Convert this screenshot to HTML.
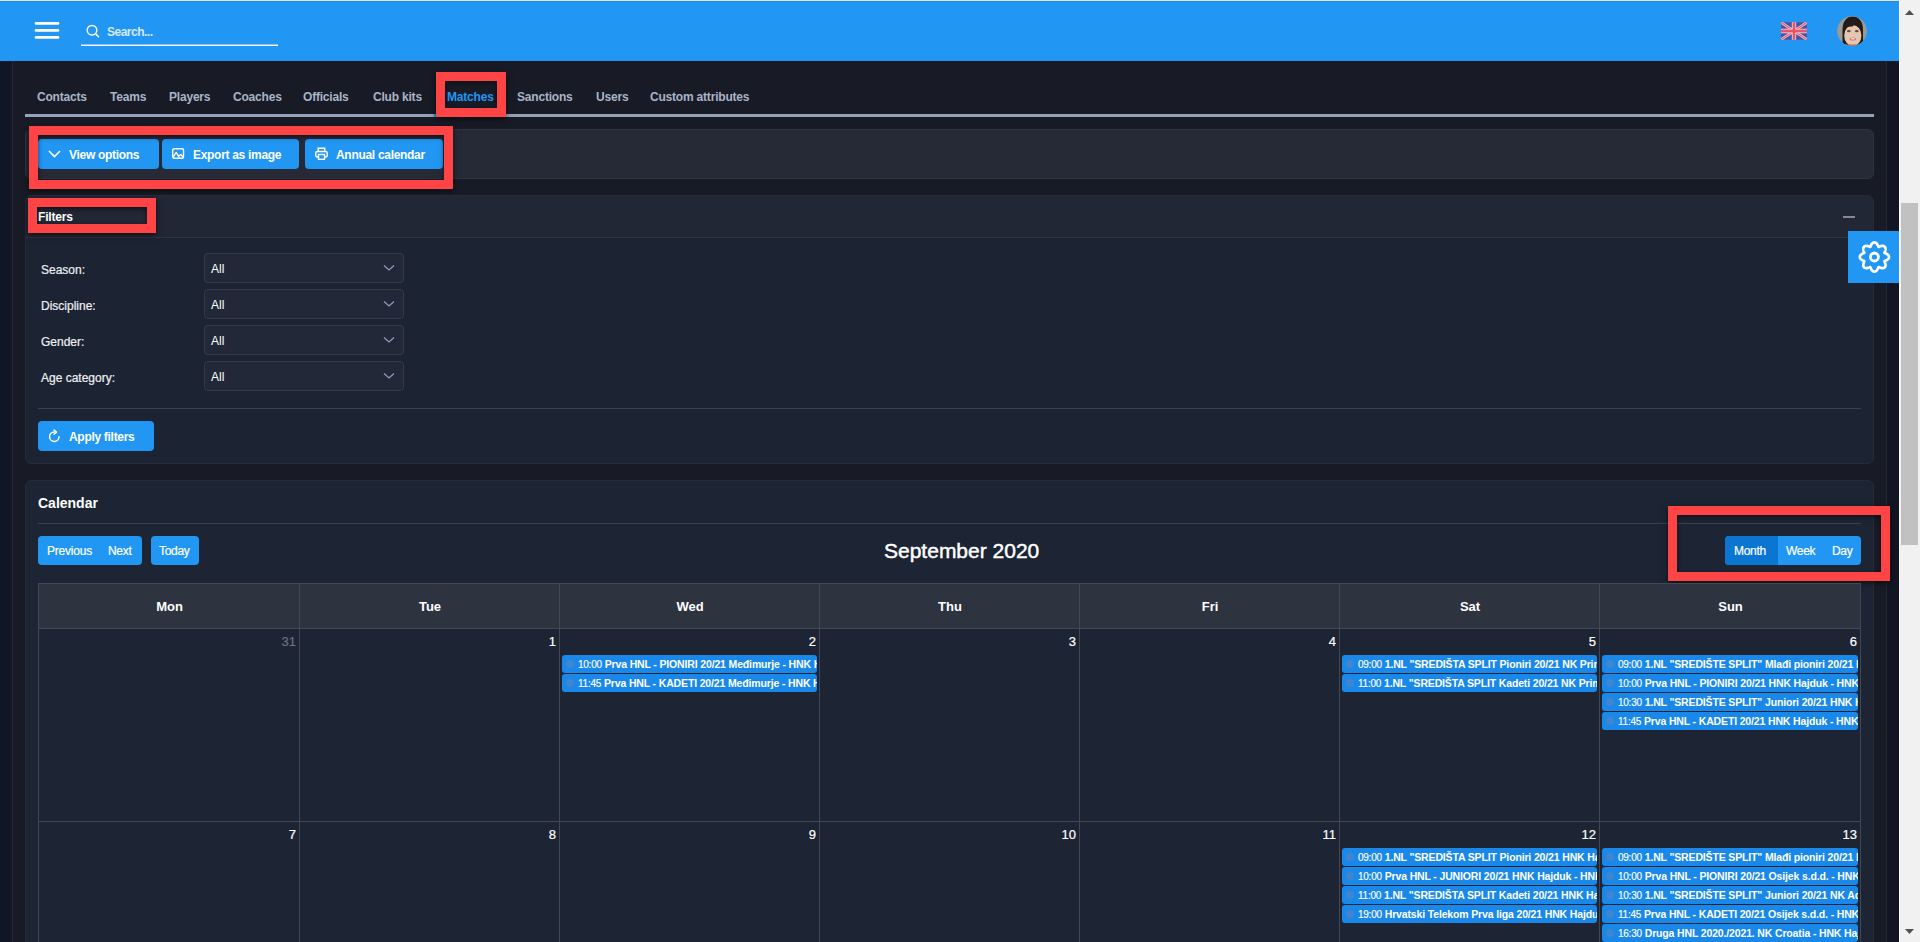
<!DOCTYPE html>
<html><head><meta charset="utf-8">
<style>
*{box-sizing:border-box;margin:0;padding:0}
html,body{width:1920px;height:942px;overflow:hidden;background:#181b26;font-family:"Liberation Sans",sans-serif;}
.abs{position:absolute}
#topline{left:0;top:0;width:1899px;height:1px;background:#efe3da}
#header{left:0;top:1px;width:1899px;height:60px;background:#2196f3;border-top:1px solid #1490f3}
#lstrip{left:0;top:61px;width:12px;height:881px;background:#111624}
#lline{left:12px;top:61px;width:1px;height:881px;background:#252933}
#rline{left:1886px;top:61px;width:1px;height:881px;background:#252933}
#rstrip{left:1887px;top:61px;width:12px;height:881px;background:#121622}
#sb{left:1899px;top:0;width:21px;height:942px;background:#f1f1f1;border-left:1px solid #fff}
#thumb{left:1901px;top:203px;width:17px;height:342px;background:#c1c1c1}
.tab{position:absolute;top:90px;font-size:12px;font-weight:bold;color:#a9b4c6;letter-spacing:-0.2px;white-space:nowrap}
#tabline{left:25px;top:114px;width:1849px;height:3px;background:#95a3b9}
.card{position:absolute;left:25px;width:1849px;border-radius:6px}
.btn{position:absolute;background:#2196f3;border-radius:4px;color:#fff;font-size:12px;font-weight:bold;white-space:nowrap;letter-spacing:-0.3px}
.red{position:absolute;border:9px solid #fe4444;box-shadow:0 2px 6px rgba(0,0,0,.6), inset 0 2px 5px rgba(0,0,0,.55)}
.lbl{position:absolute;left:41px;margin-top:1px;-webkit-text-stroke:0.2px #eef0f4;font-size:12px;color:#eef0f4;white-space:nowrap}
.sel{position:absolute;left:204px;width:200px;height:30px;border:1px solid #343a48;border-radius:4px;background:#222837}
.sel span{position:absolute;left:6px;top:8px;font-size:12px;color:#fff}
.sel svg{position:absolute;right:8px;top:10px}
.dh{top:599px;text-align:center;font-size:13px;font-weight:bold;color:#fff}
.dn{text-align:right;font-size:13px;color:#fff;-webkit-text-stroke:0.2px currentColor}
.ev{position:absolute;height:18px;background:#1a88e8;border-radius:3px;overflow:hidden;white-space:nowrap}
.ev i{position:absolute;left:4px;top:5px;width:8px;height:8px;border-radius:50%;background:rgba(120,130,170,.4)}
.et{position:absolute;left:16px;top:3px;font-size:10.5px;line-height:13px;color:#fff;white-space:nowrap}
.tm{letter-spacing:-0.25px;color:#fff;font-size:10px;-webkit-text-stroke:0.15px #fff}
.et b{font-weight:bold;letter-spacing:-0.15px}
</style></head><body>
<div class="abs" id="topline"></div>
<div class="abs" id="header"></div>
<div class="abs" id="lstrip"></div>
<div class="abs" id="lline"></div>
<div class="abs" id="rline"></div>
<div class="abs" id="rstrip"></div>

<!-- hamburger -->
<svg class="abs" style="left:34px;top:21px" width="26" height="19" viewBox="0 0 26 19"><g stroke="#fff" stroke-width="2.6" stroke-linecap="round"><line x1="2" y1="2.4" x2="24" y2="2.4"/><line x1="2" y1="9.4" x2="24" y2="9.4"/><line x1="2" y1="16.4" x2="24" y2="16.4"/></g></svg>
<!-- search -->
<svg class="abs" style="left:85px;top:23px" width="16" height="16" viewBox="0 0 16 16"><circle cx="7" cy="7.2" r="4.8" fill="none" stroke="#fff" stroke-width="1.5"/><line x1="10.5" y1="10.7" x2="13.6" y2="13.8" stroke="#fff" stroke-width="1.6" stroke-linecap="round"/></svg>
<div class="abs" style="left:107px;top:25px;font-size:12px;font-weight:bold;color:#d6e9fc;letter-spacing:-0.5px">Search...</div>
<div class="abs" style="left:81px;top:45px;width:197px;height:1px;background:#fff;box-shadow:0 -1px 0 rgba(255,255,255,.45)"></div>

<!-- flag -->
<svg class="abs" style="left:1781px;top:22px" width="26" height="18" viewBox="0 0 60 40"><rect width="60" height="40" fill="#4a52a4"/><path d="M0,0 L60,40 M60,0 L0,40" stroke="#f0c8d0" stroke-width="6"/><path d="M0,0 L60,40 M60,0 L0,40" stroke="#e8556a" stroke-width="2.5"/><path d="M30,0 V40 M0,20 H60" stroke="#f4e6ea" stroke-width="10"/><path d="M30,0 V40 M0,20 H60" stroke="#e8556a" stroke-width="6.5"/></svg>
<!-- avatar -->
<svg class="abs" style="left:1837px;top:16px" width="30" height="30" viewBox="0 0 30 30"><defs><clipPath id="cc"><circle cx="15" cy="15" r="14.8"/></clipPath><filter id="bl" x="-10%" y="-10%" width="120%" height="120%"><feGaussianBlur stdDeviation="0.45"/></filter></defs><g clip-path="url(#cc)"><rect width="30" height="30" fill="#9c9a95"/><g filter="url(#bl)"><path d="M5.5,30 L5.5,14 C5.5,5 10,0.5 15.5,0.5 C21.5,0.5 26,5 26,14 L26,30Z" fill="#221a17"/><ellipse cx="15.8" cy="19.5" rx="8.6" ry="10.6" fill="#e6c6b0"/><path d="M6.5,15 C6.5,5 11,2 15.5,2 C20,2 24.5,5 24.5,15 C23,11.5 21,9.5 17,9 L15.5,10.5 C12,10 9,11 6.5,15Z" fill="#221a17"/><ellipse cx="11.8" cy="15.2" rx="1.9" ry="1.1" fill="#5e4a42"/><ellipse cx="19.8" cy="15.2" rx="1.9" ry="1.1" fill="#5e4a42"/><ellipse cx="15.8" cy="23" rx="3.2" ry="1.5" fill="#c97a78"/><ellipse cx="15.8" cy="22.7" rx="2.2" ry="0.7" fill="#f0e0dc"/><rect x="8" y="28.5" width="15" height="2" fill="#b86a46"/></g></g></svg>


<!-- tabs -->
<div class="tab" style="left:37px">Contacts</div>
<div class="tab" style="left:110px">Teams</div>
<div class="tab" style="left:169px">Players</div>
<div class="tab" style="left:233px">Coaches</div>
<div class="tab" style="left:303px">Officials</div>
<div class="tab" style="left:373px">Club kits</div>
<div class="tab" style="left:447px;color:#2196f3">Matches</div>
<div class="tab" style="left:517px">Sanctions</div>
<div class="tab" style="left:596px">Users</div>
<div class="tab" style="left:650px">Custom attributes</div>
<div class="abs" id="tabline"></div>
<div class="abs" style="left:434px;top:114px;width:72px;height:3px;background:#2196f3"></div>
<div class="red" style="left:436px;top:72px;width:70px;height:45px"></div>

<!-- buttons card -->
<div class="card" style="top:129px;height:50px;background:#262a36;border:1px solid #30343f"></div>
<div class="btn" style="left:38px;top:139px;width:121px;height:30px">
 <svg class="abs" style="left:10px;top:11px" width="13" height="8" viewBox="0 0 13 8"><path d="M1,1 L6.5,6.5 L12,1" fill="none" stroke="#fff" stroke-width="1.6"/></svg>
 <span class="abs" style="left:31px;top:9px">View options</span></div>
<div class="btn" style="left:162px;top:139px;width:137px;height:30px">
 <svg class="abs" style="left:10px;top:9px" width="13" height="12" viewBox="0 0 13 12"><rect x="0.7" y="0.7" width="10.8" height="9.5" rx="1.5" fill="none" stroke="#fff" stroke-width="1.4"/><path d="M1,9.4 L4.2,4.4 L7.5,9.8 M6.4,8.3 L8.9,6.5 L11.2,9.4" fill="none" stroke="#fff" stroke-width="1.3" stroke-linejoin="round"/></svg>
 <span class="abs" style="left:31px;top:9px">Export as image</span></div>
<div class="btn" style="left:305px;top:139px;width:138px;height:30px">
 <svg class="abs" style="left:10px;top:8px" width="13" height="13" viewBox="0 0 13 13"><path d="M3.2,4.5 V1.2 H9.8 V4.5" fill="none" stroke="#fff" stroke-width="1.4"/><rect x="0.8" y="4.5" width="11.4" height="5.5" rx="1.5" fill="none" stroke="#fff" stroke-width="1.4"/><rect x="3.5" y="7.5" width="6" height="4.8" fill="#2196f3" stroke="#fff" stroke-width="1.4"/></svg>
 <span class="abs" style="left:31px;top:9px">Annual calendar</span></div>
<div class="red" style="left:29px;top:126px;width:424px;height:63px"></div>

<!-- filters card -->
<div class="card" style="top:195px;height:269px;background:#1c2332;border:1px solid #262b38;overflow:hidden">
  <div class="abs" style="left:0;top:0;width:1849px;height:42px;background:#222736;border-bottom:1px solid #2e3341"></div>
</div>
<div class="abs" style="left:38px;top:210px;font-size:12px;font-weight:bold;color:#fff;letter-spacing:-0.2px">Filters</div>
<div class="abs" style="left:1843px;top:216px;width:12px;height:2px;background:#7f899c"></div>
<div class="red" style="left:28px;top:198px;width:128px;height:35px"></div>

<div class="lbl" style="top:262px">Season:</div>
<div class="lbl" style="top:298px">Discipline:</div>
<div class="lbl" style="top:334px">Gender:</div>
<div class="lbl" style="top:370px">Age category:</div>
<div class="sel" style="top:253px"><span>All</span><svg width="12" height="8" viewBox="0 0 12 8"><path d="M1,1.5 L6,6 L11,1.5" fill="none" stroke="#8c9cbc" stroke-width="1.3"/></svg></div>
<div class="sel" style="top:289px"><span>All</span><svg width="12" height="8" viewBox="0 0 12 8"><path d="M1,1.5 L6,6 L11,1.5" fill="none" stroke="#8c9cbc" stroke-width="1.3"/></svg></div>
<div class="sel" style="top:325px"><span>All</span><svg width="12" height="8" viewBox="0 0 12 8"><path d="M1,1.5 L6,6 L11,1.5" fill="none" stroke="#8c9cbc" stroke-width="1.3"/></svg></div>
<div class="sel" style="top:361px"><span>All</span><svg width="12" height="8" viewBox="0 0 12 8"><path d="M1,1.5 L6,6 L11,1.5" fill="none" stroke="#8c9cbc" stroke-width="1.3"/></svg></div>
<div class="abs" style="left:38px;top:408px;width:1823px;height:1px;background:#3a404e"></div>
<div class="btn" style="left:38px;top:421px;width:116px;height:30px">
 <svg class="abs" style="left:10px;top:8px" width="14" height="14" viewBox="0 0 14 14"><path d="M6.3,3.0 A4.7,4.7 0 1 0 11,7.7" fill="none" stroke="#fff" stroke-width="1.5" stroke-linecap="round"/><path d="M6.1,1.1 L8.4,3.1 L6.1,5.3" fill="none" stroke="#fff" stroke-width="1.5" stroke-linecap="round" stroke-linejoin="round"/></svg>
 <span class="abs" style="left:31px;top:9px;letter-spacing:-0.3px">Apply filters</span></div>

<!-- calendar card -->
<div class="card" style="top:480px;height:480px;background:#1d2433;border:1px solid #262b38"></div>
<div class="abs" style="left:38px;top:495px;font-size:14px;font-weight:bold;color:#fff">Calendar</div>
<div class="abs" style="left:38px;top:523px;width:1823px;height:1px;background:#3a404e"></div>
<div class="btn" style="left:38px;top:536px;width:104px;height:29px;font-weight:normal;font-size:12px;-webkit-text-stroke:0.2px #fff"><span class="abs" style="left:9px;top:8px;letter-spacing:-0.2px">Previous</span><span class="abs" style="left:70px;top:8px">Next</span></div>
<div class="btn" style="left:151px;top:536px;width:48px;height:29px;font-weight:normal;font-size:12px;-webkit-text-stroke:0.2px #fff"><span class="abs" style="left:8px;top:8px">Today</span></div>
<div class="abs" style="left:884px;top:539px;font-size:21px;color:#fff;white-space:nowrap;-webkit-text-stroke:0.45px #fff">September 2020</div>
<div class="btn" style="left:1725px;top:536px;width:136px;height:29px;font-weight:normal;font-size:12px;-webkit-text-stroke:0.2px #fff;overflow:hidden"><div class="abs" style="left:0;top:0;width:53px;height:29px;background:#0b76d1"></div><span class="abs" style="left:9px;top:8px">Month</span><span class="abs" style="left:61px;top:8px">Week</span><span class="abs" style="left:107px;top:8px">Day</span></div>
<div class="red" style="left:1668px;top:506px;width:222px;height:75px"></div>
<div class="abs" style="left:38px;top:583px;width:1823px;height:46px;background:#2e3340"></div>
<div class="abs" style="left:38px;top:583px;width:1823px;height:1px;background:#414755"></div>
<div class="abs" style="left:38px;top:628px;width:1823px;height:1px;background:#414755"></div>
<div class="abs" style="left:38px;top:821px;width:1823px;height:1px;background:#414755"></div>
<div class="abs" style="left:38px;top:583px;width:1px;height:360px;background:#414755"></div>
<div class="abs" style="left:299px;top:583px;width:1px;height:360px;background:#414755"></div>
<div class="abs" style="left:559px;top:583px;width:1px;height:360px;background:#414755"></div>
<div class="abs" style="left:819px;top:583px;width:1px;height:360px;background:#414755"></div>
<div class="abs" style="left:1079px;top:583px;width:1px;height:360px;background:#414755"></div>
<div class="abs" style="left:1339px;top:583px;width:1px;height:360px;background:#414755"></div>
<div class="abs" style="left:1599px;top:583px;width:1px;height:360px;background:#414755"></div>
<div class="abs" style="left:1860px;top:583px;width:1px;height:360px;background:#414755"></div>
<div class="abs dh" style="left:39px;width:261px">Mon</div>
<div class="abs dh" style="left:300px;width:260px">Tue</div>
<div class="abs dh" style="left:560px;width:260px">Wed</div>
<div class="abs dh" style="left:820px;width:260px">Thu</div>
<div class="abs dh" style="left:1080px;width:260px">Fri</div>
<div class="abs dh" style="left:1340px;width:260px">Sat</div>
<div class="abs dh" style="left:1600px;width:261px">Sun</div>
<div class="abs dn" style="left:38px;width:258px;top:634px"><span style="color:#6b7280">31</span></div>
<div class="abs dn" style="left:38px;width:258px;top:827px"><span>7</span></div>
<div class="abs dn" style="left:299px;width:257px;top:634px"><span>1</span></div>
<div class="abs dn" style="left:299px;width:257px;top:827px"><span>8</span></div>
<div class="abs dn" style="left:559px;width:257px;top:634px"><span>2</span></div>
<div class="abs dn" style="left:559px;width:257px;top:827px"><span>9</span></div>
<div class="abs dn" style="left:819px;width:257px;top:634px"><span>3</span></div>
<div class="abs dn" style="left:819px;width:257px;top:827px"><span>10</span></div>
<div class="abs dn" style="left:1079px;width:257px;top:634px"><span>4</span></div>
<div class="abs dn" style="left:1079px;width:257px;top:827px"><span>11</span></div>
<div class="abs dn" style="left:1339px;width:257px;top:634px"><span>5</span></div>
<div class="abs dn" style="left:1339px;width:257px;top:827px"><span>12</span></div>
<div class="abs dn" style="left:1599px;width:258px;top:634px"><span>6</span></div>
<div class="abs dn" style="left:1599px;width:258px;top:827px"><span>13</span></div>
<div class="ev" style="left:562px;top:655px;width:255px"><i></i><div class="et"><span class="tm">10:00</span> <b>Prva HNL - PIONIRI 20/21 Međimurje - HNK Hajduk</b></div></div>
<div class="ev" style="left:562px;top:674px;width:255px"><i></i><div class="et"><span class="tm">11:45</span> <b>Prva HNL - KADETI 20/21 Međimurje - HNK Hajduk</b></div></div>
<div class="ev" style="left:1342px;top:655px;width:255px"><i></i><div class="et"><span class="tm">09:00</span> <b>1.NL "SREDIŠTA SPLIT Pioniri 20/21 NK Primorac</b></div></div>
<div class="ev" style="left:1342px;top:674px;width:255px"><i></i><div class="et"><span class="tm">11:00</span> <b>1.NL "SREDIŠTA SPLIT Kadeti 20/21 NK Primorac</b></div></div>
<div class="ev" style="left:1602px;top:655px;width:256px"><i></i><div class="et"><span class="tm">09:00</span> <b>1.NL "SREDIŠTE SPLIT" Mlađi pioniri 20/21 HNK Hajduk</b></div></div>
<div class="ev" style="left:1602px;top:674px;width:256px"><i></i><div class="et"><span class="tm">10:00</span> <b>Prva HNL - PIONIRI 20/21 HNK Hajduk - HNK Rijeka</b></div></div>
<div class="ev" style="left:1602px;top:693px;width:256px"><i></i><div class="et"><span class="tm">10:30</span> <b>1.NL "SREDIŠTE SPLIT" Juniori 20/21 HNK Hajduk</b></div></div>
<div class="ev" style="left:1602px;top:712px;width:256px"><i></i><div class="et"><span class="tm">11:45</span> <b>Prva HNL - KADETI 20/21 HNK Hajduk - HNK Rijeka</b></div></div>
<div class="ev" style="left:1342px;top:848px;width:255px"><i></i><div class="et"><span class="tm">09:00</span> <b>1.NL "SREDIŠTA SPLIT Pioniri 20/21 HNK Hajduk</b></div></div>
<div class="ev" style="left:1342px;top:867px;width:255px"><i></i><div class="et"><span class="tm">10:00</span> <b>Prva HNL - JUNIORI 20/21 HNK Hajduk - HNK Rijeka</b></div></div>
<div class="ev" style="left:1342px;top:886px;width:255px"><i></i><div class="et"><span class="tm">11:00</span> <b>1.NL "SREDIŠTA SPLIT Kadeti 20/21 HNK Hajduk</b></div></div>
<div class="ev" style="left:1342px;top:905px;width:255px"><i></i><div class="et"><span class="tm">19:00</span> <b>Hrvatski Telekom Prva liga 20/21 HNK Hajduk - NK Lokomotiva</b></div></div>
<div class="ev" style="left:1602px;top:848px;width:256px"><i></i><div class="et"><span class="tm">09:00</span> <b>1.NL "SREDIŠTE SPLIT" Mlađi pioniri 20/21 NK Adriatic</b></div></div>
<div class="ev" style="left:1602px;top:867px;width:256px"><i></i><div class="et"><span class="tm">10:00</span> <b>Prva HNL - PIONIRI 20/21 Osijek s.d.d. - HNK Hajduk</b></div></div>
<div class="ev" style="left:1602px;top:886px;width:256px"><i></i><div class="et"><span class="tm">10:30</span> <b>1.NL "SREDIŠTE SPLIT" Juniori 20/21 NK Adriatic</b></div></div>
<div class="ev" style="left:1602px;top:905px;width:256px"><i></i><div class="et"><span class="tm">11:45</span> <b>Prva HNL - KADETI 20/21 Osijek s.d.d. - HNK Hajduk</b></div></div>
<div class="ev" style="left:1602px;top:924px;width:256px"><i></i><div class="et"><span class="tm">16:30</span> <b>Druga HNL 2020./2021. NK Croatia - HNK Hajduk II</b></div></div>

<!-- gear -->
<div class="abs" style="left:1848px;top:231px;width:51px;height:52px;background:#2196f3"></div>
<svg class="abs" style="left:1848px;top:231px" width="52" height="52" viewBox="0 0 52 52"><path d="M26.40,11.40 L26.63,11.41 L26.86,11.44 L27.08,11.50 L27.31,11.57 L27.53,11.67 L27.74,11.78 L27.95,11.92 L28.16,12.07 L28.36,12.24 L28.55,12.42 L28.73,12.62 L28.91,12.84 L29.08,13.06 L29.24,13.30 L29.39,13.54 L29.54,13.79 L29.67,14.04 L29.80,14.30 L29.92,14.56 L30.03,14.81 L30.14,15.06 L30.25,15.31 L30.35,15.54 L30.46,15.75 L30.57,15.93 L30.78,15.89 L31.00,15.81 L31.24,15.72 L31.49,15.62 L31.74,15.52 L32.00,15.42 L32.27,15.32 L32.54,15.23 L32.82,15.15 L33.10,15.07 L33.37,15.01 L33.65,14.96 L33.93,14.92 L34.21,14.89 L34.48,14.88 L34.75,14.88 L35.01,14.91 L35.26,14.94 L35.50,15.00 L35.74,15.07 L35.96,15.16 L36.17,15.26 L36.37,15.38 L36.55,15.52 L36.72,15.68 L36.88,15.85 L37.02,16.03 L37.14,16.23 L37.24,16.44 L37.33,16.66 L37.40,16.90 L37.46,17.14 L37.49,17.39 L37.52,17.65 L37.52,17.92 L37.51,18.19 L37.48,18.47 L37.44,18.75 L37.39,19.03 L37.33,19.30 L37.25,19.58 L37.17,19.86 L37.08,20.13 L36.98,20.40 L36.88,20.66 L36.78,20.91 L36.68,21.16 L36.59,21.40 L36.51,21.62 L36.47,21.83 L36.65,21.94 L36.86,22.05 L37.09,22.15 L37.34,22.26 L37.59,22.37 L37.84,22.48 L38.10,22.60 L38.36,22.73 L38.61,22.86 L38.86,23.01 L39.10,23.16 L39.34,23.32 L39.56,23.49 L39.78,23.67 L39.98,23.85 L40.16,24.04 L40.33,24.24 L40.48,24.45 L40.62,24.66 L40.73,24.87 L40.83,25.09 L40.90,25.32 L40.96,25.54 L40.99,25.77 L41.00,26.00 L40.99,26.23 L40.96,26.46 L40.90,26.68 L40.83,26.91 L40.73,27.13 L40.62,27.34 L40.48,27.55 L40.33,27.76 L40.16,27.96 L39.98,28.15 L39.78,28.33 L39.56,28.51 L39.34,28.68 L39.10,28.84 L38.86,28.99 L38.61,29.14 L38.36,29.27 L38.10,29.40 L37.84,29.52 L37.59,29.63 L37.34,29.74 L37.09,29.85 L36.86,29.95 L36.65,30.06 L36.47,30.17 L36.51,30.38 L36.59,30.60 L36.68,30.84 L36.78,31.09 L36.88,31.34 L36.98,31.60 L37.08,31.87 L37.17,32.14 L37.25,32.42 L37.33,32.70 L37.39,32.97 L37.44,33.25 L37.48,33.53 L37.51,33.81 L37.52,34.08 L37.52,34.35 L37.49,34.61 L37.46,34.86 L37.40,35.10 L37.33,35.34 L37.24,35.56 L37.14,35.77 L37.02,35.97 L36.88,36.15 L36.72,36.32 L36.55,36.48 L36.37,36.62 L36.17,36.74 L35.96,36.84 L35.74,36.93 L35.50,37.00 L35.26,37.06 L35.01,37.09 L34.75,37.12 L34.48,37.12 L34.21,37.11 L33.93,37.08 L33.65,37.04 L33.37,36.99 L33.10,36.93 L32.82,36.85 L32.54,36.77 L32.27,36.68 L32.00,36.58 L31.74,36.48 L31.49,36.38 L31.24,36.28 L31.00,36.19 L30.78,36.11 L30.57,36.07 L30.46,36.25 L30.35,36.46 L30.25,36.69 L30.14,36.94 L30.03,37.19 L29.92,37.44 L29.80,37.70 L29.67,37.96 L29.54,38.21 L29.39,38.46 L29.24,38.70 L29.08,38.94 L28.91,39.16 L28.73,39.38 L28.55,39.58 L28.36,39.76 L28.16,39.93 L27.95,40.08 L27.74,40.22 L27.53,40.33 L27.31,40.43 L27.08,40.50 L26.86,40.56 L26.63,40.59 L26.40,40.60 L26.17,40.59 L25.94,40.56 L25.72,40.50 L25.49,40.43 L25.27,40.33 L25.06,40.22 L24.85,40.08 L24.64,39.93 L24.44,39.76 L24.25,39.58 L24.07,39.38 L23.89,39.16 L23.72,38.94 L23.56,38.70 L23.41,38.46 L23.26,38.21 L23.13,37.96 L23.00,37.70 L22.88,37.44 L22.77,37.19 L22.66,36.94 L22.55,36.69 L22.45,36.46 L22.34,36.25 L22.23,36.07 L22.02,36.11 L21.80,36.19 L21.56,36.28 L21.31,36.38 L21.06,36.48 L20.80,36.58 L20.53,36.68 L20.26,36.77 L19.98,36.85 L19.70,36.93 L19.43,36.99 L19.15,37.04 L18.87,37.08 L18.59,37.11 L18.32,37.12 L18.05,37.12 L17.79,37.09 L17.54,37.06 L17.30,37.00 L17.06,36.93 L16.84,36.84 L16.63,36.74 L16.43,36.62 L16.25,36.48 L16.08,36.32 L15.92,36.15 L15.78,35.97 L15.66,35.77 L15.56,35.56 L15.47,35.34 L15.40,35.10 L15.34,34.86 L15.31,34.61 L15.28,34.35 L15.28,34.08 L15.29,33.81 L15.32,33.53 L15.36,33.25 L15.41,32.97 L15.47,32.70 L15.55,32.42 L15.63,32.14 L15.72,31.87 L15.82,31.60 L15.92,31.34 L16.02,31.09 L16.12,30.84 L16.21,30.60 L16.29,30.38 L16.33,30.17 L16.15,30.06 L15.94,29.95 L15.71,29.85 L15.46,29.74 L15.21,29.63 L14.96,29.52 L14.70,29.40 L14.44,29.27 L14.19,29.14 L13.94,28.99 L13.70,28.84 L13.46,28.68 L13.24,28.51 L13.02,28.33 L12.82,28.15 L12.64,27.96 L12.47,27.76 L12.32,27.55 L12.18,27.34 L12.07,27.13 L11.97,26.91 L11.90,26.68 L11.84,26.46 L11.81,26.23 L11.80,26.00 L11.81,25.77 L11.84,25.54 L11.90,25.32 L11.97,25.09 L12.07,24.87 L12.18,24.66 L12.32,24.45 L12.47,24.24 L12.64,24.04 L12.82,23.85 L13.02,23.67 L13.24,23.49 L13.46,23.32 L13.70,23.16 L13.94,23.01 L14.19,22.86 L14.44,22.73 L14.70,22.60 L14.96,22.48 L15.21,22.37 L15.46,22.26 L15.71,22.15 L15.94,22.05 L16.15,21.94 L16.33,21.83 L16.29,21.62 L16.21,21.40 L16.12,21.16 L16.02,20.91 L15.92,20.66 L15.82,20.40 L15.72,20.13 L15.63,19.86 L15.55,19.58 L15.47,19.30 L15.41,19.03 L15.36,18.75 L15.32,18.47 L15.29,18.19 L15.28,17.92 L15.28,17.65 L15.31,17.39 L15.34,17.14 L15.40,16.90 L15.47,16.66 L15.56,16.44 L15.66,16.23 L15.78,16.03 L15.92,15.85 L16.08,15.68 L16.25,15.52 L16.43,15.38 L16.63,15.26 L16.84,15.16 L17.06,15.07 L17.30,15.00 L17.54,14.94 L17.79,14.91 L18.05,14.88 L18.32,14.88 L18.59,14.89 L18.87,14.92 L19.15,14.96 L19.43,15.01 L19.70,15.07 L19.98,15.15 L20.26,15.23 L20.53,15.32 L20.80,15.42 L21.06,15.52 L21.31,15.62 L21.56,15.72 L21.80,15.81 L22.02,15.89 L22.23,15.93 L22.34,15.75 L22.45,15.54 L22.55,15.31 L22.66,15.06 L22.77,14.81 L22.88,14.56 L23.00,14.30 L23.13,14.04 L23.26,13.79 L23.41,13.54 L23.56,13.30 L23.72,13.06 L23.89,12.84 L24.07,12.62 L24.25,12.42 L24.44,12.24 L24.64,12.07 L24.85,11.92 L25.06,11.78 L25.27,11.67 L25.49,11.57 L25.72,11.50 L25.94,11.44 L26.17,11.41Z" fill="none" stroke="#fff" stroke-width="2.7" stroke-linejoin="round"/><circle cx="26.4" cy="26" r="4" fill="none" stroke="#fff" stroke-width="2.8"/></svg>

<!-- scrollbar -->
<div class="abs" id="sb"></div>
<div class="abs" id="thumb"></div>
<svg class="abs" style="left:1905px;top:10px" width="9" height="5"><path d="M0,5 L4.5,0 L9,5Z" fill="#505050"/></svg>
<svg class="abs" style="left:1905px;top:929px" width="9" height="5"><path d="M0,0 L4.5,5 L9,0Z" fill="#505050"/></svg>

</body></html>
